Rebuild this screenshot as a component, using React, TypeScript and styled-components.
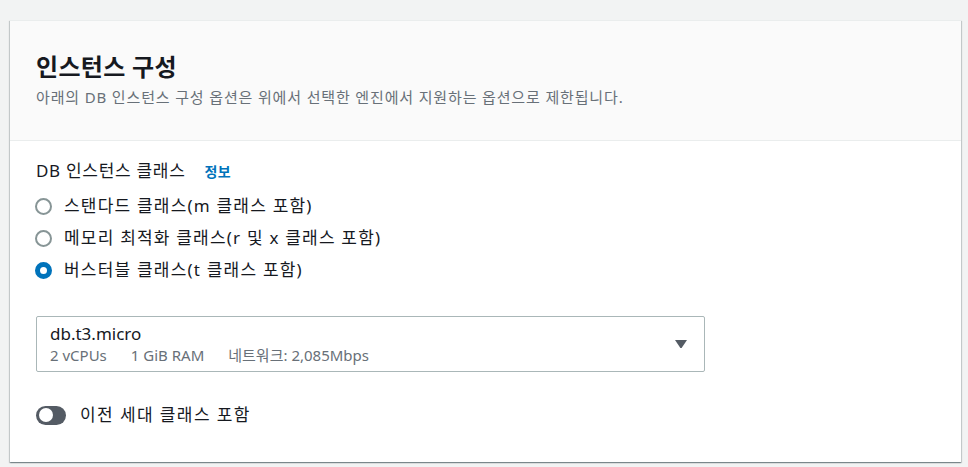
import styled, { createGlobalStyle } from 'styled-components';

const Global = createGlobalStyle`
  html, body {
    margin: 0;
    background: #f2f3f3;
    font-family: "Noto Sans", "Noto Sans CJK KR", sans-serif;
    color: #16191f;
  }
`

const Page = styled.div`
  padding: 20px 7px 6px 10px;
`

const Card = styled.section`
  background: #ffffff;
  border-top: 1px solid #eaeded;
  box-shadow: 0 1px 1px 0 rgba(0, 28, 36, 0.3), 1px 1px 1px 0 rgba(0, 28, 36, 0.15),
    -1px 1px 1px 0 rgba(0, 28, 36, 0.15);
`

const Header = styled.header`
  background: #fafafa;
  border-bottom: 1px solid #eaeded;
  padding: 32px 26px 33px;
  display: flex;
  flex-direction: column;
  gap: 6px;
`

const Title = styled.h2`
  margin: 0;
  font-size: 24px;
  line-height: 28px;
  font-weight: 700;
  letter-spacing: 0.3px;
`

const Description = styled.p`
  margin: 0;
  font-size: 15px;
  line-height: 20px;
  letter-spacing: 0.85px;
  color: #687078;
`

const Body = styled.div`
  padding: 19px 26px 36px;
  display: flex;
  flex-direction: column;
`

const Label = styled.div`
  font-size: 17px;
  line-height: 22px;
  letter-spacing: 0.7px;
  display: flex;
  gap: 19px;
  align-items: baseline;
`

const Info = styled.a`
  color: #0073bb;
  font-size: 14px;
  font-weight: 700;
  letter-spacing: 0.5px;
  text-decoration: none;
`

const RadioGroup = styled.div`
  margin-top: 12px;
  display: flex;
  flex-direction: column;
  gap: 10px;
`

const RadioRow = styled.label`
  display: flex;
  align-items: center;
  gap: 12px;
  font-size: 17px;
  line-height: 22px;
  letter-spacing: 1.2px;
`

const RadioDot = styled.span<{ $checked?: boolean }>`
  box-sizing: border-box;
  width: 17px;
  height: 17px;
  border-radius: 50%;
  margin-left: -1px;
  border: ${p => (p.$checked ? '5px solid #0073bb' : '2px solid #879596')};
  background: #ffffff;
  flex: none;
`

const Select = styled.div`
  margin-top: 35px;
  width: 669px;
  box-sizing: border-box;
  border: 1px solid #aab7b8;
  border-radius: 2px;
  padding: 6px 16px 6px 13px;
  display: flex;
  align-items: center;
  justify-content: space-between;
`

const Option = styled.div`
  display: flex;
  flex-direction: column;
`

const OptionName = styled.div`
  font-size: 17px;
  line-height: 22px;
`

const OptionMeta = styled.div`
  display: flex;
  gap: 24px;
  font-size: 15px;
  line-height: 20px;
  color: #687078;
`

const Caret = styled.svg`
  width: 14px;
  height: 10px;
`

const ToggleRow = styled.label`
  margin-top: 32px;
  display: flex;
  align-items: center;
  gap: 14px;
  font-size: 17px;
  line-height: 22px;
  letter-spacing: 1.4px;
`

const Toggle = styled.span`
  position: relative;
  width: 30px;
  height: 19px;
  border-radius: 10px;
  background: #545b64;
  flex: none;

  &::after {
    content: '';
    position: absolute;
    left: 3px;
    top: 2.5px;
    width: 14px;
    height: 14px;
    border-radius: 50%;
    background: #ffffff;
  }
`

const classes = [
  { text: '스탠다드 클래스(m 클래스 포함)', checked: false },
  { text: '메모리 최적화 클래스(r 및 x 클래스 포함)', checked: false },
  { text: '버스터블 클래스(t 클래스 포함)', checked: true },
]

export default function App() {
  return (
    <Page>
      <Global />
      <Card>
        <Header>
          <Title>인스턴스 구성</Title>
          <Description>아래의 DB 인스턴스 구성 옵션은 위에서 선택한 엔진에서 지원하는 옵션으로 제한됩니다.</Description>
        </Header>
        <Body>
          <Label>
            DB 인스턴스 클래스
            <Info href="#">정보</Info>
          </Label>
          <RadioGroup>
            {classes.map(c => (
              <RadioRow key={c.text}>
                <RadioDot $checked={c.checked} />
                {c.text}
              </RadioRow>
            ))}
          </RadioGroup>
          <Select>
            <Option>
              <OptionName>db.t3.micro</OptionName>
              <OptionMeta>
                <span>2 vCPUs</span>
                <span>1 GiB RAM</span>
                <span>네트워크: 2,085Mbps</span>
              </OptionMeta>
            </Option>
            <Caret viewBox="0 0 14 10">
              <path d="M1 1 L13 1 L7.6 9 L6.4 9 Z" fill="#545b64" />
            </Caret>
          </Select>
          <ToggleRow>
            <Toggle />
            이전 세대 클래스 포함
          </ToggleRow>
        </Body>
      </Card>
    </Page>
  )
}
